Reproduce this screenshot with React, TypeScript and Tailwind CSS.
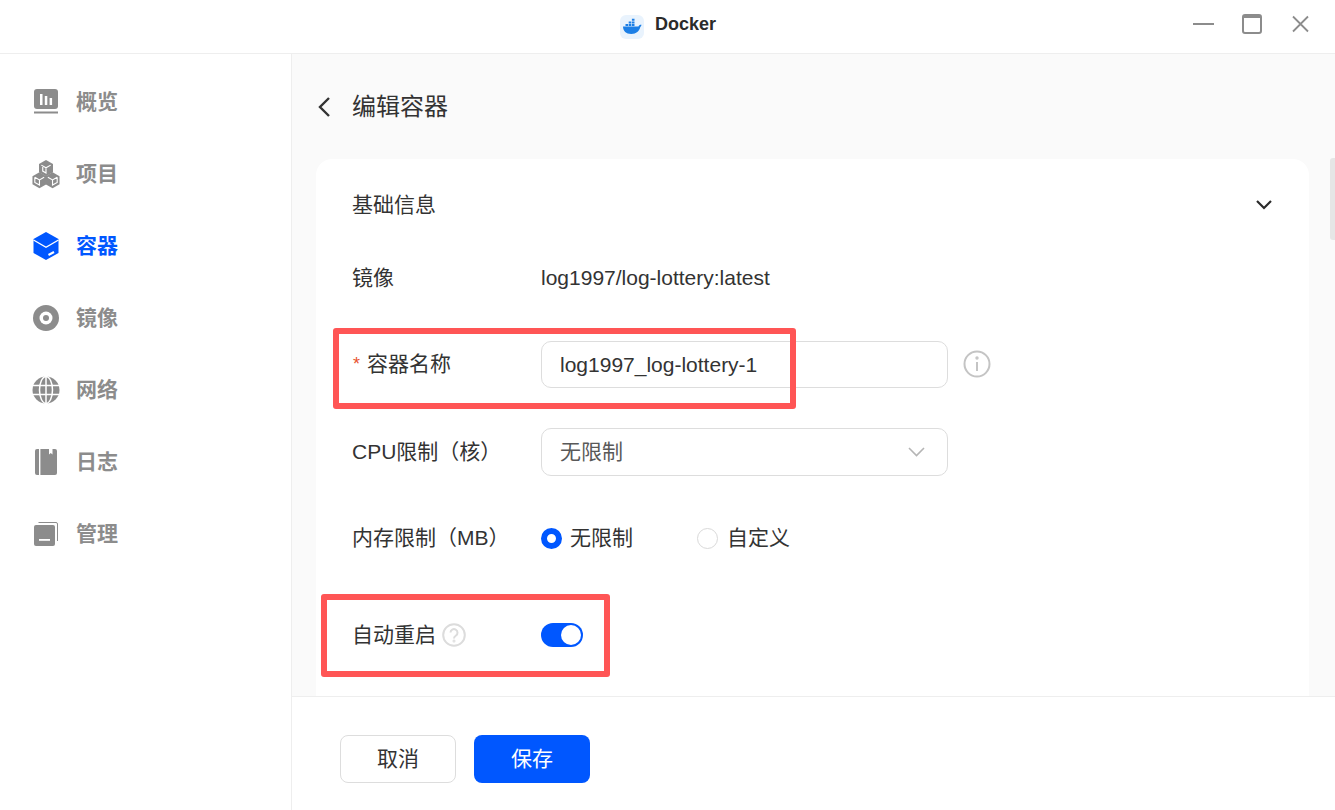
import React from 'react';

const font = 'font-["Liberation_Sans","Noto_Sans_CJK_SC",sans-serif]';

const DockerLogo = () => (
  <svg className="translate-x-[1px]" width="24" height="24" viewBox="0 0 24 24">
    <rect width="24" height="24" rx="6" fill="#e9f3fd" />
    <path d="M3 11.500h15.500c.5-1.500 1.800-2 3-1.700-.1 1-.5 1.700-1.200 2.200-.9 4-4 7-9 7C6 19 3 16 3 11.500z" fill="#1c7fe6" />
    <path d="M5.500 9h2.600v2H5.500zM8.700 9h2.600v2H8.700zM11.900 9h2.600v2h-2.600zM8.700 6.400h2.600v2H8.700zM11.900 6.400h2.600v2h-2.600zM11.900 3.800h2.600v2h-2.600z" fill="#1c7fe6" />
  </svg>
);

const OverviewIcon = () => (
  <svg width="28" height="28" viewBox="0 0 28 28">
    <rect x="2" y="1" width="24" height="20" rx="3" fill="currentColor" />
    <rect x="8" y="6" width="2.500" height="11" fill="#fff" />
    <rect x="12.800" y="8" width="2.500" height="9" fill="#fff" />
    <rect x="17.600" y="10" width="2.500" height="7" fill="#fff" />
    <rect x="2" y="23.500" width="24" height="2" fill="currentColor" />
  </svg>
);

const ProjectIcon = () => (
  <svg width="30" height="30" viewBox="0 0 30 30" fill="none">
    <path d="M15 0l7.500 4.300v8.700L15 17.300 7.500 13V4.300z" fill="currentColor" />
    <path d="M8 13l7.500 4.300V26L8 30.300.5 26v-8.700z" fill="currentColor" />
    <path d="M22 13l7.500 4.300V26L22 30.300 14.500 26v-8.700z" fill="currentColor" />
    <path d="M10 5.500l5 2.900 5-2.900M15 8.400v5.500l-3.500-2V7.500M3 18.500l5 2.900 5-2.900M8 21.400v5.500l-5-2.900v-5.500M17 18.500l5 2.900 5-2.900M22 21.400v5.500l5-2.900v-5.500" stroke="#fff" strokeWidth="1.200" />
  </svg>
);

const ContainerIcon = () => (
  <svg width="28" height="30" viewBox="0 0 28 30">
    <path d="M14 1l12.500 7v14L14 29 1.500 22V8z" fill="currentColor" />
    <path d="M1.500 9L14 16.300 26.500 9" stroke="#fff" strokeWidth="1.400" fill="none" />
    <path d="M16.500 24l5.500-3" stroke="#fff" strokeWidth="2" fill="none" />
  </svg>
);

const ImageIcon = () => (
  <svg width="28" height="28" viewBox="0 0 28 28">
    <circle cx="14" cy="14" r="13" fill="currentColor" />
    <circle cx="14" cy="14" r="6.500" fill="#fff" />
    <circle cx="14" cy="14" r="3" fill="currentColor" />
  </svg>
);

const NetworkIcon = () => (
  <svg width="28" height="28" viewBox="0 0 28 28">
    <circle cx="14" cy="14" r="13.500" fill="currentColor" />
    <g stroke="#fff" strokeWidth="1.500" fill="none">
      <ellipse cx="14" cy="14" rx="6.500" ry="13.500" />
      <path d="M14 0.500v27M1 9.500h26M1 18.500h26" />
    </g>
  </svg>
);

const LogIcon = () => (
  <svg width="28" height="28" viewBox="0 0 28 28">
    <rect x="3" y="1" width="22" height="26" rx="2" fill="currentColor" />
    <rect x="7" y="1" width="1.400" height="26" fill="#fff" />
    <path d="M17 1h3.500v5.500l-1.750-1.400L17 6.500z" fill="#fff" />
  </svg>
);

const ManageIcon = () => (
  <svg width="28" height="28" viewBox="0 0 28 28" fill="none">
    <rect x="2" y="5" width="21" height="21" rx="2" fill="currentColor" />
    <path d="M6.500 2.500h17.500a1.500 1.500 0 0 1 1.500 1.500v17" stroke="currentColor" strokeWidth="1" />
    <rect x="7" y="19" width="11" height="1.800" fill="#fff" />
  </svg>
);

const navItems = [
  { label: '概览', icon: <OverviewIcon /> },
  { label: '项目', icon: <ProjectIcon /> },
  { label: '容器', icon: <ContainerIcon />, active: true },
  { label: '镜像', icon: <ImageIcon /> },
  { label: '网络', icon: <NetworkIcon /> },
  { label: '日志', icon: <LogIcon /> },
  { label: '管理', icon: <ManageIcon /> },
];

const Sidebar = () => (
  <aside className="w-[292px] shrink-0 border-r border-[#eeeeee] bg-white pt-[12px]">
    {navItems.map((item) => (
      <div
        key={item.label}
        className={`flex h-[72px] items-center pl-[32px] text-[21px] font-bold ${item.active ? 'text-[#0057ff]' : 'text-[#8c8c8c]'}`}
      >
        <span className="flex w-[28px] justify-center">{item.icon}</span>
        <span className="ml-[16px]">{item.label}</span>
      </div>
    ))}
  </aside>
);

const Row = ({ label, className, children }: { label: React.ReactNode; className: string; children: React.ReactNode }) => (
  <div className={`flex h-[48px] items-center ${className}`}>
    <div className="w-[189px] shrink-0">{label}</div>
    {children}
  </div>
);

export default function App() {
  return (
    <div className={`relative flex h-[810px] w-[1335px] flex-col overflow-hidden bg-white text-[#333333] ${font}`}>
      <header className="relative flex h-[54px] shrink-0 items-center justify-center border-b border-[#eeeeee]">
        <div className="flex items-center">
          <DockerLogo />
          <span className="ml-[12px] -translate-y-[2px] text-[18px] font-bold text-[#2b2b2b]">Docker</span>
        </div>
        <div className="absolute right-[24px] top-[13px] flex items-center text-[#8c8c8c]">
          <svg width="22" height="22" viewBox="0 0 22 22" fill="none" stroke="currentColor" strokeWidth="2"><path d="M0 11h21" /></svg>
          <svg className="ml-[26px]" width="22" height="22" viewBox="0 0 22 22" fill="none" stroke="currentColor"><rect x="2" y="2" width="18" height="18" rx="2" strokeWidth="2" /><path d="M2 3.500h18" strokeWidth="3" /></svg>
          <svg className="ml-[28px]" width="20" height="20" viewBox="0 0 20 20" fill="none" stroke="currentColor" strokeWidth="1.800"><path d="M2 2.500l15 15M17 2.500l-15 15" /></svg>
        </div>
      </header>

      <div className="flex min-h-0 flex-1">
        <Sidebar />

        <main className="flex min-w-0 flex-1 flex-col">
          <div className="relative min-h-0 flex-1 overflow-hidden bg-[#fafafa] pl-[24px] pr-[26px]">
            <div className="flex h-[105px] items-center pl-[1px] pt-[1px] text-[#333333]">
              <svg width="16" height="22" viewBox="0 0 16 22" fill="none" stroke="currentColor" strokeWidth="2.400"><path d="M12 2L3 11l9 9" /></svg>
              <h1 className="ml-[19px] text-[24px] font-normal leading-none">编辑容器</h1>
            </div>

            <section className="h-[700px] rounded-[16px] bg-white pl-[36px] pr-[36px] text-[21px]">
              <div className="flex h-[92px] items-center justify-between">
                <span>基础信息</span>
                <svg width="18" height="12" viewBox="0 0 18 12" fill="none" stroke="#2b2b2b" strokeWidth="2.200"><path d="M2 2l7 7 7-7" /></svg>
              </div>

              <Row label="镜像" className="mt-[3px]">
                <span>log1997/log-lottery:latest</span>
              </Row>

              <Row
                className="mt-[38px]"
                label={
                  <span className="flex items-center">
                    <span className="ml-[1px] mr-[7px] text-[18px] leading-none text-[#e8532f]">*</span>容器名称
                  </span>
                }
              >
                <div className="mt-[1px] flex h-[47px] w-[407px] items-center rounded-[10px] border border-[#dddddd] pl-[18px]">log1997_log-lottery-1</div>
                <svg className="ml-[15px]" width="28" height="28" viewBox="0 0 28 28" fill="none" stroke="#c4c4c4" strokeWidth="2">
                  <circle cx="14" cy="14" r="12.500" />
                  <path d="M14 12v9" />
                  <circle cx="14" cy="8" r="0.700" />
                </svg>
              </Row>

              <Row label="CPU限制（核）" className="mt-[40px]">
                <div className="flex h-[48px] w-[407px] items-center justify-between rounded-[10px] border border-[#dddddd] pl-[18px] pr-[22px] text-[#595959]">
                  <span>无限制</span>
                  <svg width="17" height="10" viewBox="0 0 17 10" fill="none" stroke="#b5b5b5" strokeWidth="1.600"><path d="M1 1l7.500 7.500L16 1" /></svg>
                </div>
              </Row>

              <Row label="内存限制（MB）" className="mt-[38px]">
                <span className="h-[21px] w-[21px] rounded-full border-[6px] border-[#0057ff] bg-white" />
                <span className="ml-[8px] w-[127px]">无限制</span>
                <span className="h-[21px] w-[21px] rounded-full border border-[#d9d9d9] bg-white" />
                <span className="ml-[9px]">自定义</span>
              </Row>

              <Row
                className="mt-[49px]"
                label={
                  <span className="flex items-center">
                    自动重启
                    <svg className="ml-[6px]" width="24" height="24" viewBox="0 0 24 24" fill="none" stroke="#dcdcdc" strokeWidth="2">
                      <circle cx="12" cy="12" r="10.800" />
                      <path d="M8.500 9.500a3.500 3.500 0 1 1 5.500 3c-1.400 1-2 1.500-2 3" />
                      <circle cx="12" cy="18" r="0.500" />
                    </svg>
                  </span>
                }
              >
                <span className="flex h-[24px] w-[42px] items-center justify-end rounded-full bg-[#0057ff] pr-[2px]">
                  <span className="h-[20px] w-[20px] rounded-full bg-white" />
                </span>
              </Row>
            </section>

            <div className="absolute right-0 top-[104px] h-[82px] w-[5px] rounded-l-[3px] bg-[#e6e6e6]" />
          </div>

          <footer className="flex h-[114px] shrink-0 items-start gap-[18px] border-t border-[#eeeeee] bg-white pl-[48px] pt-[38px] text-[21px]">
            <button className="h-[48px] w-[116px] rounded-[8px] border border-[#dddddd] bg-white text-[#333333]">取消</button>
            <button className="h-[48px] w-[116px] rounded-[8px] bg-[#0057ff] text-white">保存</button>
          </footer>
        </main>
      </div>

      <div className="absolute left-[333px] top-[328px] h-[81px] w-[463px] rounded-[3px] border-[6px] border-[#ff5555]" />
      <div className="absolute left-[321px] top-[594px] h-[83px] w-[289px] rounded-[3px] border-[6px] border-[#ff5555]" />
    </div>
  );
}
